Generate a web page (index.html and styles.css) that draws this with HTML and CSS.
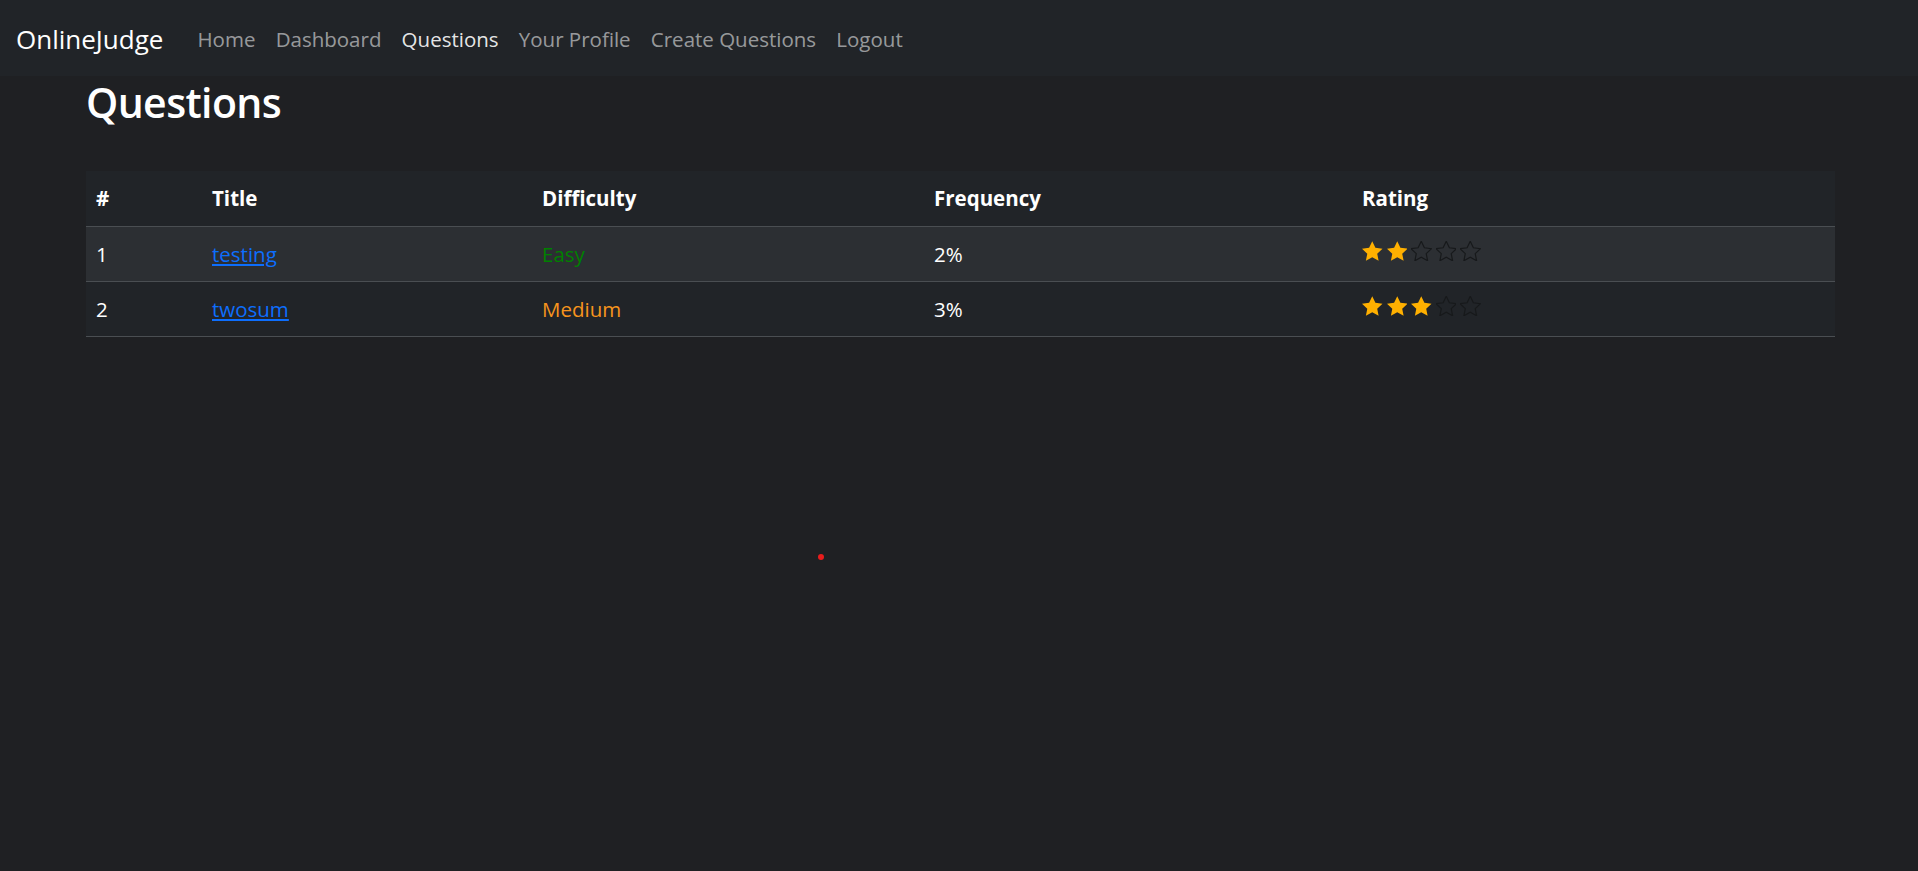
FILE: index.html
```html
<!DOCTYPE html>
<html lang="en">
<head>
<meta charset="utf-8">
<title>OnlineJudge - Questions</title>
<link rel="stylesheet" href="styles.css">
</head>
<body>
<nav class="navbar">
  <a class="brand" href="#">OnlineJudge</a>
  <ul class="nav">
    <li><a class="nav-link" href="#">Home</a></li>
    <li><a class="nav-link" href="#">Dashboard</a></li>
    <li><a class="nav-link active" href="#">Questions</a></li>
    <li><a class="nav-link" href="#">Your Profile</a></li>
    <li><a class="nav-link" href="#">Create Questions</a></li>
    <li><a class="nav-link" href="#">Logout</a></li>
  </ul>
</nav>
<main class="container">
  <h1 class="title">Questions</h1>
  <table class="qtable">
    <thead>
      <tr>
        <th class="c-num">#</th>
        <th class="c-title">Title</th>
        <th class="c-diff">Difficulty</th>
        <th class="c-freq">Frequency</th>
        <th class="c-rate">Rating</th>
      </tr>
    </thead>
    <tbody>
      <tr class="striped">
        <td>1</td>
        <td><a class="qlink" href="#">testing</a></td>
        <td class="easy">Easy</td>
        <td>2%</td>
        <td>
          <span class="stars">
            <svg class="star on" viewBox="2.5 2.3 19 18.5"><path d="M12 2.5l2.9 6.1 6.6.8-4.9 4.6 1.3 6.6L12 17.3l-5.9 3.3 1.3-6.6-4.9-4.6 6.6-.8z"/></svg>
            <svg class="star on" viewBox="2.5 2.3 19 18.5"><path d="M12 2.5l2.9 6.1 6.6.8-4.9 4.6 1.3 6.6L12 17.3l-5.9 3.3 1.3-6.6-4.9-4.6 6.6-.8z"/></svg>
            <svg class="star off" viewBox="2.5 2.3 19 18.5"><path d="M12 2.5l2.9 6.1 6.6.8-4.9 4.6 1.3 6.6L12 17.3l-5.9 3.3 1.3-6.6-4.9-4.6 6.6-.8z"/></svg>
            <svg class="star off" viewBox="2.5 2.3 19 18.5"><path d="M12 2.5l2.9 6.1 6.6.8-4.9 4.6 1.3 6.6L12 17.3l-5.9 3.3 1.3-6.6-4.9-4.6 6.6-.8z"/></svg>
            <svg class="star off" viewBox="2.5 2.3 19 18.5"><path d="M12 2.5l2.9 6.1 6.6.8-4.9 4.6 1.3 6.6L12 17.3l-5.9 3.3 1.3-6.6-4.9-4.6 6.6-.8z"/></svg>
          </span>
        </td>
      </tr>
      <tr>
        <td>2</td>
        <td><a class="qlink" href="#">twosum</a></td>
        <td class="medium">Medium</td>
        <td>3%</td>
        <td>
          <span class="stars">
            <svg class="star on" viewBox="2.5 2.3 19 18.5"><path d="M12 2.5l2.9 6.1 6.6.8-4.9 4.6 1.3 6.6L12 17.3l-5.9 3.3 1.3-6.6-4.9-4.6 6.6-.8z"/></svg>
            <svg class="star on" viewBox="2.5 2.3 19 18.5"><path d="M12 2.5l2.9 6.1 6.6.8-4.9 4.6 1.3 6.6L12 17.3l-5.9 3.3 1.3-6.6-4.9-4.6 6.6-.8z"/></svg>
            <svg class="star on" viewBox="2.5 2.3 19 18.5"><path d="M12 2.5l2.9 6.1 6.6.8-4.9 4.6 1.3 6.6L12 17.3l-5.9 3.3 1.3-6.6-4.9-4.6 6.6-.8z"/></svg>
            <svg class="star off" viewBox="2.5 2.3 19 18.5"><path d="M12 2.5l2.9 6.1 6.6.8-4.9 4.6 1.3 6.6L12 17.3l-5.9 3.3 1.3-6.6-4.9-4.6 6.6-.8z"/></svg>
            <svg class="star off" viewBox="2.5 2.3 19 18.5"><path d="M12 2.5l2.9 6.1 6.6.8-4.9 4.6 1.3 6.6L12 17.3l-5.9 3.3 1.3-6.6-4.9-4.6 6.6-.8z"/></svg>
          </span>
        </td>
      </tr>
    </tbody>
  </table>
</main>
<span class="dot"></span>
</body>
</html>
```

FILE: styles.css
```css
* { box-sizing: border-box; }

html, body {
  margin: 0;
  padding: 0;
}

body {
  background: #1f2023;
  color: #ffffff;
  font-family: "Open Sans", "Noto Sans", "Liberation Sans", sans-serif;
  font-size: 20.5px;
  line-height: 1.5;
  min-height: 871px;
  position: relative;
}

.navbar {
  height: 76px;
  background: #212428;
  display: flex;
  align-items: center;
  padding: 0 15px 0 15px;
}

.brand {
  color: #ffffff;
  text-decoration: none;
  font-size: 26px;
  margin-right: 24px;
  padding-left: 1px;
  position: relative;
  top: 1px;
}

.nav {
  list-style: none;
  margin: 0;
  padding: 0;
  display: flex;
  position: relative;
  top: 1px;
}

.nav-link {
  display: block;
  padding: 10px 10.1px;
  color: rgba(255, 255, 255, 0.55);
  text-decoration: none;
  font-size: 20.5px;
}

.nav-link.active {
  color: rgba(255, 255, 255, 0.9);
}

.container {
  padding: 0 0 0 86px;
  width: 1835px;
}

.title {
  margin: 0;
  font-size: 41px;
  letter-spacing: -0.6px;
  font-weight: 600;
  line-height: 52px;
  padding-top: 0;
}

.qtable {
  margin-top: 43px;
  width: 100%;
  border-collapse: collapse;
  background: #212428;
}

.qtable th,
.qtable td {
  text-align: left;
  padding: 12px 10px 12px 10px;
  height: 55px;
  line-height: 30px;
  border-bottom: 1px solid #4a4e52;
  vertical-align: middle;
}

.qtable th {
  font-weight: 700;
}

.c-num { width: 116px; }
.c-title { width: 330px; }
.c-diff { width: 392px; }
.c-freq { width: 428px; }

.striped td {
  background: #2c2f33;
}

.qlink {
  color: #0d6efd;
  text-decoration: underline;
}

.easy { color: #008000; }
.medium { color: #f7941d; }

.stars {
  display: inline-flex;
  gap: 4px;
  vertical-align: middle;
  position: relative;
  top: -5px;
}

.star {
  width: 20.5px;
  height: 20px;
  display: block;
}

.star.on path {
  fill: #ffb000;
}

.star.off path {
  fill: none;
  stroke: #17191b;
  stroke-width: 1.1;
}

.dot {
  position: absolute;
  left: 818px;
  top: 554px;
  width: 6px;
  height: 6px;
  border-radius: 50%;
  background: #e81c1c;
}
```
